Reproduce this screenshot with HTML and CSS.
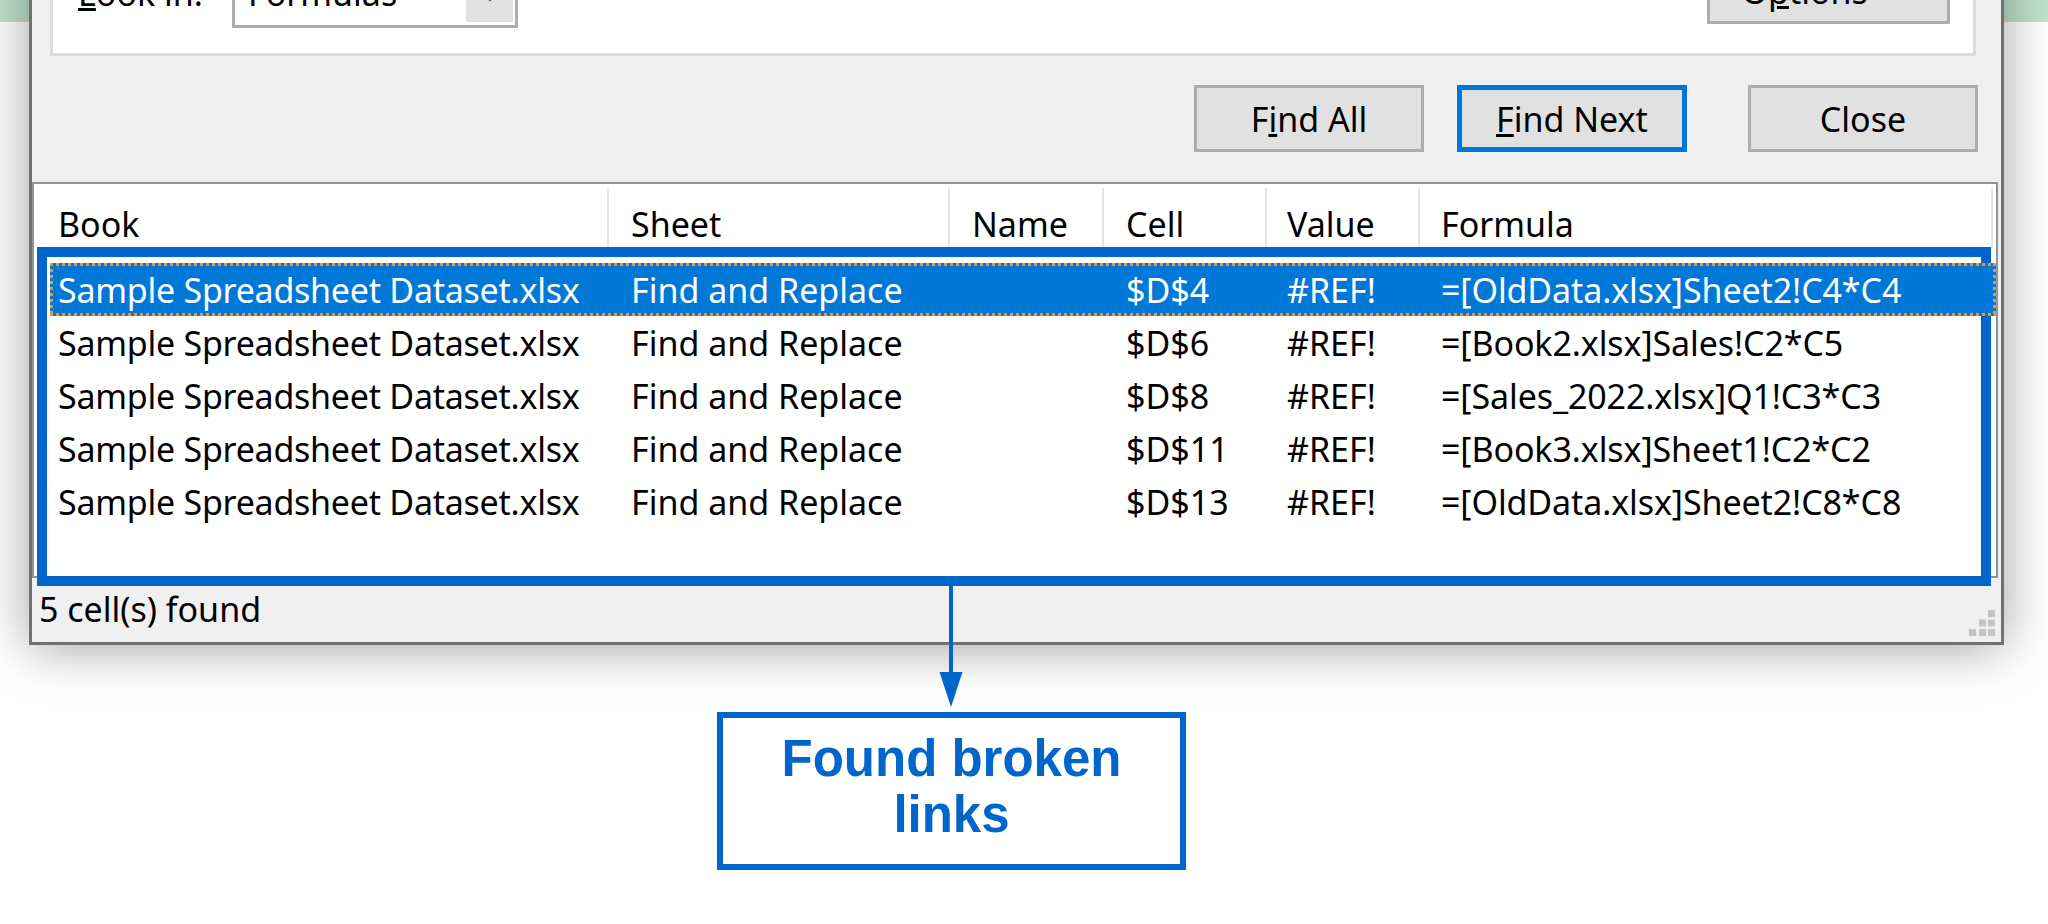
FILE: index.html
```html
<!DOCTYPE html>
<html lang="en">
<head>
<meta charset="utf-8">
<title>Find and Replace - results</title>
<link rel="stylesheet" href="styles.css">
</head>
<body>
<div class="screen">
  <div class="dialog">
    <div class="options-panel">
      <div class="field-label"><u>L</u>ook in:</div>
      <div class="combo">
        <span class="combo-value">Formulas</span>
        <span class="combo-btn"><svg class="chev" viewBox="0 0 14 8" width="14" height="8"><path d="M1 1 L7 7 L13 1" fill="none" stroke="#404040" stroke-width="2"/></svg></span>
      </div>
      <div class="spacer"></div>
      <button class="btn btn-options">O<u>p</u>tions &lt;&lt;</button>
    </div>

    <div class="actions">
      <button class="btn">F<u>i</u>nd All</button>
      <button class="btn btn-default btn-gap-s"><u>F</u>ind Next</button>
      <button class="btn btn-gap-l">Close</button>
    </div>

    <div class="results">
      <div class="results-header">
        <div class="col-head book">Book</div>
        <div class="col-head">Sheet</div>
        <div class="col-head">Name</div>
        <div class="col-head">Cell</div>
        <div class="col-head value">Value</div>
        <div class="col-head formula">Formula</div>
      </div>
      <div class="results-body">
        <div class="row selected">
          <div class="cell book">Sample Spreadsheet Dataset.xlsx</div>
          <div class="cell">Find and Replace</div>
          <div class="cell"></div>
          <div class="cell">$D$4</div>
          <div class="cell value">#REF!</div>
          <div class="cell formula">=[OldData.xlsx]Sheet2!C4*C4</div>
        </div>
        <div class="row">
          <div class="cell book">Sample Spreadsheet Dataset.xlsx</div>
          <div class="cell">Find and Replace</div>
          <div class="cell"></div>
          <div class="cell">$D$6</div>
          <div class="cell value">#REF!</div>
          <div class="cell formula">=[Book2.xlsx]Sales!C2*C5</div>
        </div>
        <div class="row">
          <div class="cell book">Sample Spreadsheet Dataset.xlsx</div>
          <div class="cell">Find and Replace</div>
          <div class="cell"></div>
          <div class="cell">$D$8</div>
          <div class="cell value">#REF!</div>
          <div class="cell formula">=[Sales_2022.xlsx]Q1!C3*C3</div>
        </div>
        <div class="row">
          <div class="cell book">Sample Spreadsheet Dataset.xlsx</div>
          <div class="cell">Find and Replace</div>
          <div class="cell"></div>
          <div class="cell">$D$11</div>
          <div class="cell value">#REF!</div>
          <div class="cell formula">=[Book3.xlsx]Sheet1!C2*C2</div>
        </div>
        <div class="row">
          <div class="cell book">Sample Spreadsheet Dataset.xlsx</div>
          <div class="cell">Find and Replace</div>
          <div class="cell"></div>
          <div class="cell">$D$13</div>
          <div class="cell value">#REF!</div>
          <div class="cell formula">=[OldData.xlsx]Sheet2!C8*C8</div>
        </div>
      </div>
    </div>

    <div class="statusbar">
      <span class="status-text">5 cell(s) found</span>
      <svg class="grip" viewBox="0 0 26 26" width="26" height="26">
        <rect x="19" y="0" width="7" height="7"/>
        <rect x="10" y="9.5" width="7" height="7"/>
        <rect x="19" y="9.5" width="7" height="7"/>
        <rect x="0" y="19" width="7" height="7"/>
        <rect x="10" y="19" width="7" height="7"/>
        <rect x="19" y="19" width="7" height="7"/>
      </svg>
    </div>
  </div>

  <div class="annot-rect"></div>
  <svg class="annot-arrow" viewBox="0 0 24 122" width="24" height="122">
    <line x1="12" y1="0" x2="12" y2="90" stroke="#0066cc" stroke-width="4"/>
    <polygon points="0.5,86 23.5,86 12,121" fill="#0066cc"/>
  </svg>
  <div class="annot-callout">Found broken<br>links</div>
</div>
</body>
</html>
```

FILE: styles.css
```css
html, body {
  margin: 0;
  padding: 0;
  background: #ffffff;
}

.screen {
  position: relative;
  display: flow-root;
  width: 2048px;
  height: 924px;
  overflow: hidden;
  background: linear-gradient(#c0e4cc 0, #c0e4cc 22px, #ffffff 22px);
  font-family: "Noto Sans", "Open Sans", sans-serif;
  font-size: 34px;
  color: #000;
}

u {
  text-decoration-thickness: 3px;
  text-underline-offset: 2px;
}

/* ---------- dialog window ---------- */
.dialog {
  box-sizing: border-box;
  width: 1975px;
  margin: -97px 0 0 29px;
  background: #f0f0f0;
  border: 3px solid #707070;
  box-shadow: 0 2px 50px rgba(0, 0, 0, 0.38);
}

.options-panel {
  box-sizing: border-box;
  height: 150px;
  margin: 0 25px 0 18px;
  padding: 0 23px 25px 25px;
  background: #ffffff;
  border: 3px solid #dcdcdc;
  border-top: 0;
  display: flex;
  align-items: flex-end;
}

.field-label {
  width: 154px;
  line-height: 34px;
  margin-bottom: 18px;
  white-space: nowrap;
}

.combo {
  box-sizing: border-box;
  width: 286px;
  height: 60px;
  border: 3px solid #adadad;
  background: #ffffff;
  display: flex;
}

.combo-value {
  flex: 1;
  align-self: flex-end;
  padding: 0 0 15px 13px;
  line-height: 34px;
}

.combo-btn {
  width: 47px;
  margin: 0 2px 3px 0;
  background: #e1e1e1;
  display: flex;
  align-items: center;
  justify-content: center;
}

.spacer {
  flex: 1;
}

.btn {
  box-sizing: border-box;
  width: 230px;
  height: 67px;
  padding: 0;
  border: 3px solid #adadad;
  background: #e1e1e1;
  font: inherit;
  line-height: 46px;
  color: #000;
}

.btn-default {
  border: 5px solid #0078d7;
}

.btn-options {
  width: 243px;
  margin-bottom: 4px;
}

.actions {
  display: flex;
  justify-content: flex-end;
  margin-top: 29px;
  padding-right: 23px;
}

.btn-gap-s {
  margin-left: 33px;
}

.btn-gap-l {
  margin-left: 61px;
}

/* ---------- results list ---------- */
.results {
  box-sizing: border-box;
  height: 396px;
  margin: 30px 3px 0 0;
  background: #ffffff;
  border: 2px solid #8f939a;
}

.results-header {
  display: grid;
  grid-template-columns: 575px 341px 154px 163px 153px 573px;
  height: 65px;
}

.col-head {
  position: relative;
  box-sizing: border-box;
  padding: 17px 0 0 22px;
  line-height: 46px;
  white-space: nowrap;
}

.col-head.book {
  padding-left: 24px;
}

.col-head.value {
  padding-left: 20px;
}

.col-head.formula {
  padding-left: 21px;
}

.col-head::after {
  content: "";
  position: absolute;
  right: 0;
  top: 4px;
  width: 2px;
  height: 60px;
  background: #e5e5e5;
}

.results-body {
  padding: 14px 0 0 16px;
}

.row {
  box-sizing: border-box;
  display: grid;
  grid-template-columns: 559px 341px 154px 163px 153px 575px;
  height: 53px;
  padding-top: 2px;
  line-height: 51px;
}

.cell {
  padding-left: 22px;
  white-space: nowrap;
}

.cell.book {
  padding-left: 8px;
  letter-spacing: -0.25px;
}

.cell.value {
  padding-left: 20px;
}

.cell.formula {
  padding-left: 21px;
  letter-spacing: -0.1px;
}

.row.selected {
  position: relative;
  z-index: 2;
  background: #0078d7;
  color: #ffffff;
}

.row.selected::after {
  content: "";
  position: absolute;
  inset: 0;
  background:
    repeating-linear-gradient(90deg, #f7931e 0, #f7931e 3px, transparent 3px, transparent 6px) left top / 100% 3px no-repeat,
    repeating-linear-gradient(90deg, #f7931e 0, #f7931e 3px, transparent 3px, transparent 6px) left bottom / 100% 3px no-repeat,
    repeating-linear-gradient(180deg, #f7931e 0, #f7931e 3px, transparent 3px, transparent 6px) left top / 3px 100% no-repeat,
    repeating-linear-gradient(180deg, #f7931e 0, #f7931e 3px, transparent 3px, transparent 6px) right top / 3px 100% no-repeat;
}

/* ---------- status bar ---------- */
.statusbar {
  box-sizing: border-box;
  height: 64px;
  display: flex;
  padding: 8px 6px 6px 7px;
  line-height: 46px;
}

.grip {
  margin-left: auto;
  align-self: flex-end;
  fill: #c4c4c4;
}

/* ---------- annotations ---------- */
.annot-rect {
  position: absolute;
  left: 37px;
  top: 247px;
  width: 1954px;
  height: 339px;
  box-sizing: border-box;
  border: 10px solid #0066cc;
  z-index: 1;
}

.annot-arrow {
  position: absolute;
  left: 939px;
  top: 586px;
  z-index: 1;
}

.annot-callout {
  position: absolute;
  left: 717px;
  top: 712px;
  width: 469px;
  height: 158px;
  box-sizing: border-box;
  padding-top: 13px;
  border: 6px solid #0066cc;
  background: #ffffff;
  color: #0066cc;
  font-family: "Liberation Sans", Arial, sans-serif;
  font-weight: bold;
  font-size: 51px;
  line-height: 56px;
  text-align: center;
  z-index: 1;
}
```
